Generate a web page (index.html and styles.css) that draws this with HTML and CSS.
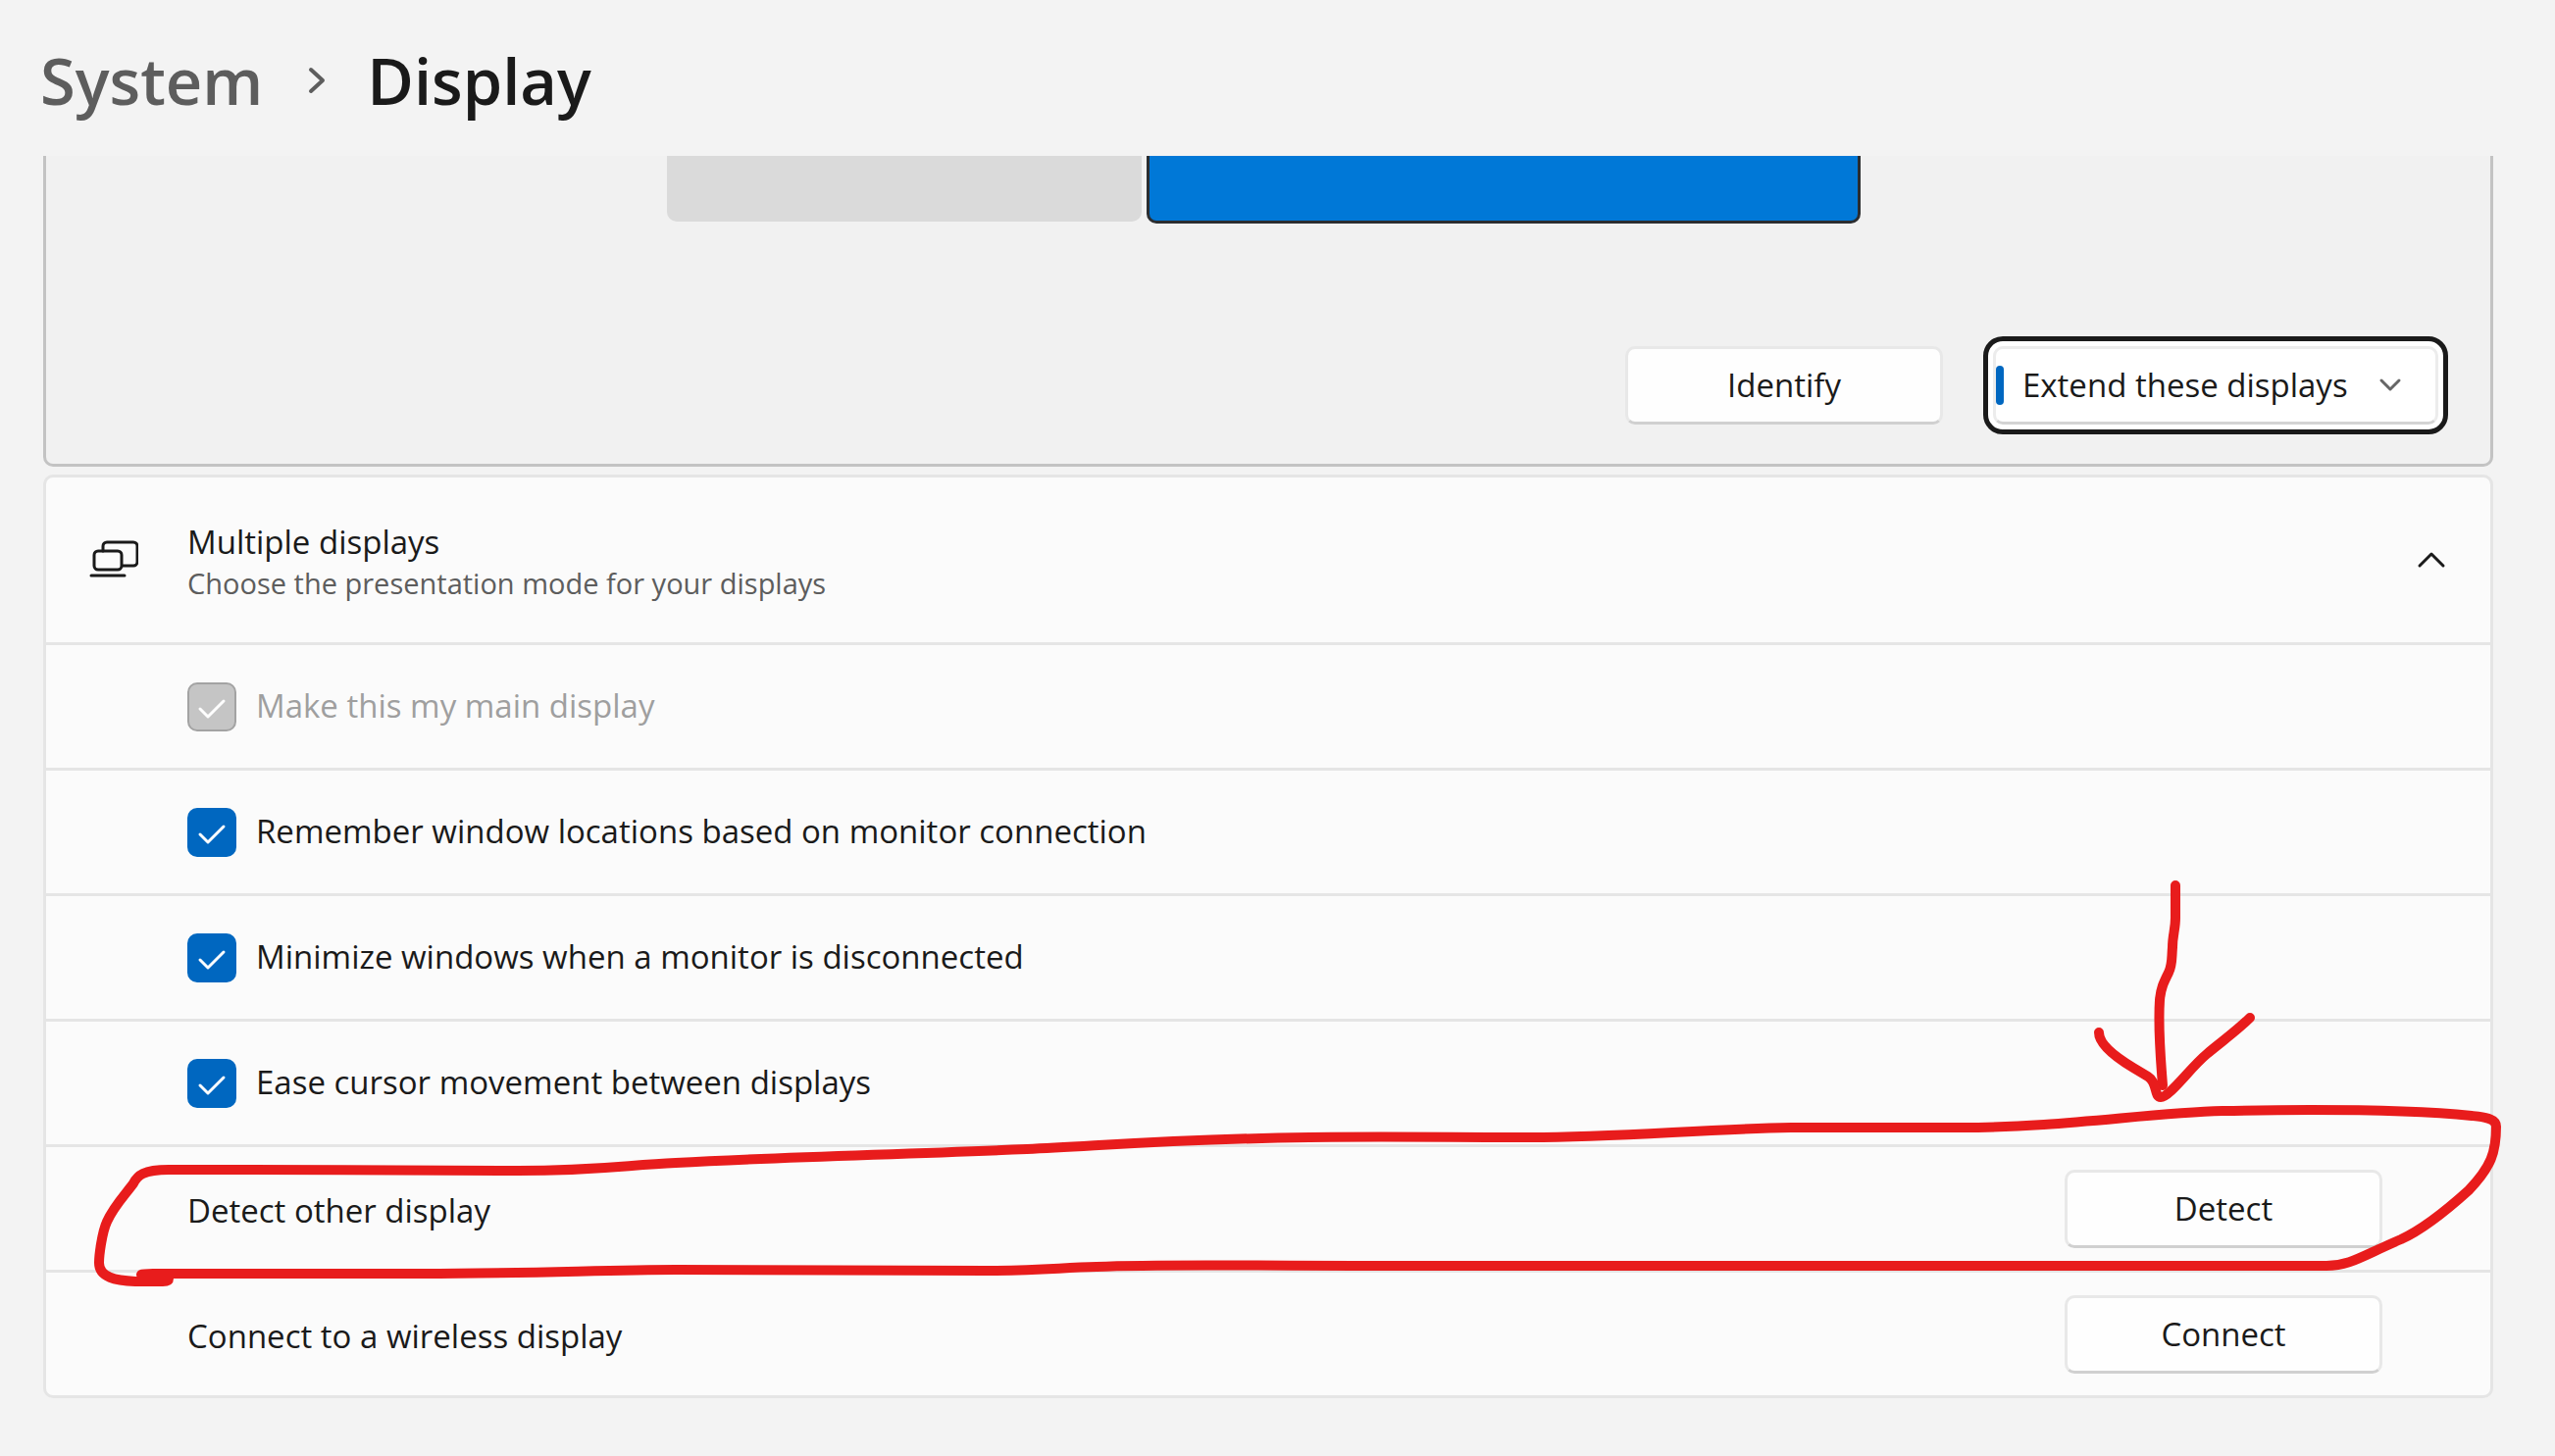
FILE: index.html
```html
<!DOCTYPE html>
<html lang="en">
<head>
<meta charset="utf-8">
<title>System - Display</title>
<link rel="stylesheet" href="styles.css">
</head>
<body>
<div class="page">
  <header class="breadcrumb">
    <a class="crumb" href="#system">System</a>
    <svg class="crumb-arrow" width="20" height="28" viewBox="0 0 20 28" aria-hidden="true"><path d="M3 3 15 14 3 25"/></svg>
    <h1 class="crumb-current">Display</h1>
  </header>

  <main class="content">
    <section class="arrange" aria-label="Display arrangement">
      <div class="monitors">
        <div class="monitor"></div>
        <div class="monitor monitor-active"></div>
      </div>
      <div class="arrange-actions">
        <button class="button" type="button">Identify</button>
        <div class="combo">
          <select class="combo-select" aria-label="Presentation mode">
            <option>Extend these displays</option>
            <option>Duplicate these displays</option>
          </select>
          <span class="combo-mark"></span>
          <svg class="combo-arrow" width="24" height="16" viewBox="0 0 24 16" aria-hidden="true"><path d="M3 3 12 12 21 3"/></svg>
        </div>
      </div>
    </section>

    <section class="card">
      <div class="card-head">
        <svg class="card-icon" width="50" height="40" viewBox="0 0 50 40" aria-hidden="true">
          <path d="M14 11V6a4 4 0 0 1 4-4h27a4 4 0 0 1 4 4v16a4 4 0 0 1-4 4H34"/>
          <rect x="5" y="11" width="28" height="19" rx="4"/>
          <path d="M2 36H36"/>
        </svg>
        <div class="card-titles">
          <h2 class="card-title">Multiple displays</h2>
          <p class="card-sub">Choose the presentation mode for your displays</p>
        </div>
        <button class="expander" type="button" aria-label="Collapse" aria-expanded="true">
          <svg width="30" height="18" viewBox="0 0 30 18" aria-hidden="true"><path d="M3 15 15 3 27 15"/></svg>
        </button>
      </div>
      <div class="row"><label class="check check-disabled"><input type="checkbox" checked disabled><svg class="tick" width="50" height="50" viewBox="0 0 50 50" aria-hidden="true"><path d="M13 27 21 35 37 19"/></svg><span class="check-text">Make this my main display</span></label></div>
      <div class="row"><label class="check"><input type="checkbox" checked><svg class="tick" width="50" height="50" viewBox="0 0 50 50" aria-hidden="true"><path d="M13 27 21 35 37 19"/></svg><span class="check-text">Remember window locations based on monitor connection</span></label></div>
      <div class="row"><label class="check"><input type="checkbox" checked><svg class="tick" width="50" height="50" viewBox="0 0 50 50" aria-hidden="true"><path d="M13 27 21 35 37 19"/></svg><span class="check-text">Minimize windows when a monitor is disconnected</span></label></div>
      <div class="row"><label class="check"><input type="checkbox" checked><svg class="tick" width="50" height="50" viewBox="0 0 50 50" aria-hidden="true"><path d="M13 27 21 35 37 19"/></svg><span class="check-text">Ease cursor movement between displays</span></label></div>
      <div class="row row-action"><span class="row-text">Detect other display</span><button class="button" type="button">Detect</button></div>
      <div class="row row-action"><span class="row-text">Connect to a wireless display</span><button class="button" type="button">Connect</button></div>
    </section>
  </main>

  <svg class="markup" viewBox="0 0 2605 1485" aria-hidden="true">
    <path d="M2218 903V936C2218 948 2215 954 2215 966C2214 978 2215 984 2211 992C2206 1002 2203 1008 2202 1020C2200 1050 2203 1080 2205 1107"/>
    <path d="M2140 1053C2140 1066 2160 1080 2175 1089L2190 1098C2200 1104 2196 1119 2203 1119C2212 1119 2233 1089 2250 1075C2264 1063 2280 1052 2294 1038"/>
    <path d="M144 1300C146 1299 150 1299 156 1299H430C540 1299 620 1295 689 1295C760 1295 930 1296 1005 1296C1060 1296 1080 1293 1118 1292C1190 1289 1260 1291 1391 1291H2372C2396 1291 2408 1281 2448 1264C2470 1254 2496 1233 2517 1214C2540 1190 2545 1175 2545 1149C2545 1140 2530 1139 2520 1138C2440 1130 2320 1132 2266 1133C2190 1135 2100 1150 2000 1150H1826C1730 1152 1650 1160 1560 1160C1480 1160 1400 1159 1335 1160C1190 1162 1120 1169 1047 1172C900 1178 800 1180 689 1186C640 1188 610 1194 528 1194C400 1193 300 1193 172 1193C146 1193 140 1199 136 1207C128 1218 116 1230 109 1246C104 1257 101 1280 101 1288C101 1303 118 1306 138 1307H166C170 1307 172 1306 172 1304"/>
  </svg>
</div>
</body>
</html>
```
FILE: styles.css
```css
* { box-sizing: border-box; }

body {
  margin: 0;
  background: #f3f3f3;
  color: #1a1a1a;
  font-family: "Open Sans", "Noto Sans", sans-serif;
  font-size: 33px;
  line-height: 44px;
}

svg { fill: none; stroke: currentColor; stroke-linecap: round; stroke-linejoin: round; flex: none; }
h1, h2, p { margin: 0; font-weight: 400; font-size: inherit; }

.page { padding: 0 63px 59px 44px; position: relative; }

.breadcrumb {
  display: flex;
  align-items: center;
  height: 159px;
  margin-left: -3px;
  padding-top: 4px;
  font-size: 65px;
  line-height: 90px;
}
.crumb { color: #5d5d5d; font-weight: 600; text-decoration: none; }
.crumb-arrow { margin: 0 40px 0 46px; color: #5d5d5d; stroke-width: 4; }
.crumb-current { font-weight: 600; }

.arrange {
  border: 3px solid #c3c3c3;
  border-top: 0;
  border-radius: 0 0 10px 10px;
  background: #f1f1f1;
}
.monitors {
  display: flex;
  align-items: flex-start;
  justify-content: center;
  gap: 5px;
  padding-right: 9px;
}
.monitor { width: 484px; height: 67px; border-radius: 0 0 10px 10px; background: #dadada; }
.monitor-active { width: 728px; height: 69px; border: 3px solid #2b2d30; border-top: 0; background: #0078d7; }

.arrange-actions {
  display: flex;
  justify-content: flex-end;
  align-items: center;
  gap: 41px;
  padding: 115px 43px 30px;
}

.button {
  width: 324px;
  height: 80px;
  padding: 0;
  border: 3px solid #e8e8e8;
  border-bottom-color: #d0d0d0;
  border-radius: 10px;
  background: #fefefe;
  color: inherit;
  font: inherit;
}

.combo {
  position: relative;
  padding: 5px;
  border: 5px solid #1a1a1a;
  border-radius: 20px;
  background: #fff;
}
.combo-select {
  display: block;
  width: 454px;
  height: 80px;
  padding: 0 0 1px 27px;
  border: 3px solid #ececec;
  border-bottom-color: #d3d3d3;
  border-radius: 10px;
  outline: 0;
  background: #fff;
  color: inherit;
  font: inherit;
  appearance: none;
}
.combo-mark { position: absolute; left: 8px; top: 25px; width: 8px; height: 40px; border-radius: 4px; background: #0067c0; }
.combo-arrow { position: absolute; right: 42px; top: 37px; color: #666; stroke-width: 3; pointer-events: none; }

.card {
  margin-top: 8px;
  border: 3px solid #e5e5e5;
  border-radius: 10px;
  background: #fbfbfb;
}
.card-head { display: flex; align-items: center; height: 168px; padding: 0 45px 0 44px; }
.card-icon { width: 50px; margin-right: 50px; stroke-width: 3; }
.card-titles { flex: 1; padding-top: 4px; }
.card-sub { color: #5d5d5d; font-size: 29px; line-height: 40px; }
.expander { display: flex; padding: 0; border: 0; background: none; color: inherit; stroke-width: 3; }

.row {
  display: flex;
  align-items: center;
  justify-content: space-between;
  height: 128px;
  padding: 0 110px 0 144px;
  border-top: 3px solid #e5e5e5;
}
.row-text { padding-top: 4px; }

.check { position: relative; display: flex; align-items: center; gap: 20px; }
.check input {
  width: 50px;
  height: 50px;
  margin: 0;
  border-radius: 10px;
  background: #0067c0;
  appearance: none;
}
.check-text { padding-bottom: 2px; }
.check-disabled { color: #9f9f9f; }
.check-disabled input { border: 2px solid #a3a3a3; background: #c5c5c5; }
.tick { position: absolute; left: 0; color: #fff; stroke-width: 3; }

.markup { position: absolute; left: 0; top: 0; width: 100%; color: #e81c1c; stroke-width: 10; pointer-events: none; }
```
